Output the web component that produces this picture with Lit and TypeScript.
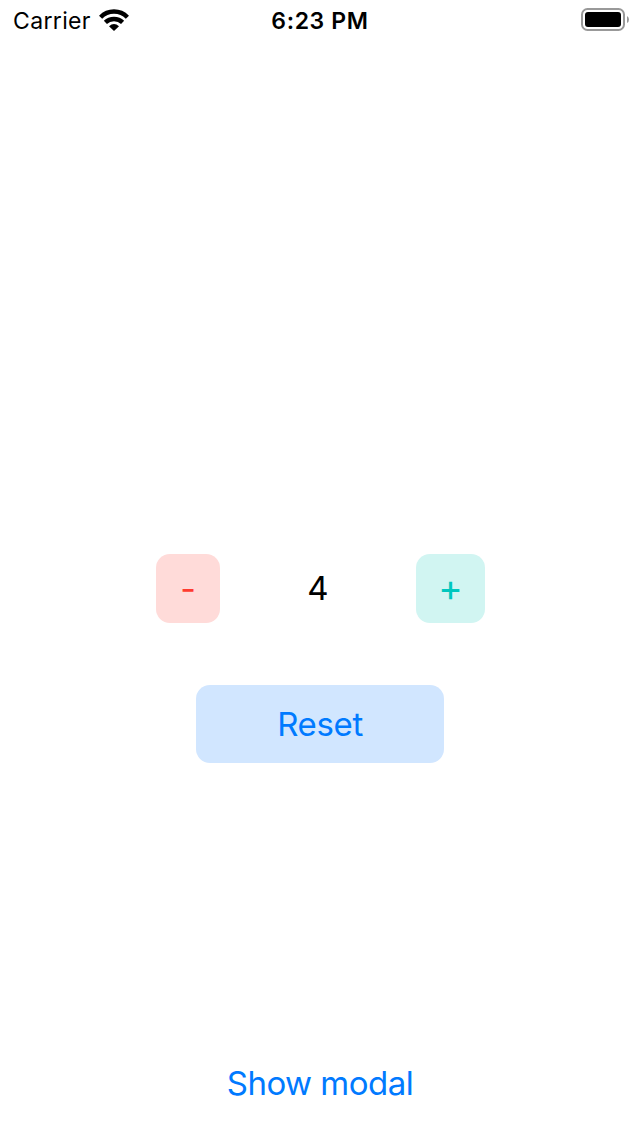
import { LitElement, html, css } from "lit";
import { customElement, state } from "lit/decorators.js";

@customElement("app-root")
class AppRoot extends LitElement {
  @state() count = 4;

  static styles = css`
    :host { display: flex; flex-direction: column; width: 640px; height: 1136px; background: #fff; color: #000; font-family: Inter, sans-serif; overflow: hidden; }
    .status { display: grid; grid-template-columns: 1fr auto 1fr; align-items: center; height: 40px; padding: 0 10px 0 13px; box-sizing: border-box; line-height: 40px; }
    .carrier { display: flex; align-items: center; gap: 8.6px; font-size: 23px; letter-spacing: 0.35px; }
    .carrier span, .time { padding-top: 2px; line-height: 38px; }
    .time { font-weight: 600; font-size: 23px; letter-spacing: 0.65px; margin-left: -3px; }
    .battery { justify-self: end; }
    svg { display: block; }
    .main { flex: 1; padding-top: 514px; box-sizing: border-box; }
    .stepper { display: flex; justify-content: space-between; width: 329px; margin: 0 0 62px 156px; height: 69px; align-items: center; font-size: 33px; }
    .stepper span { padding-bottom: 2px; }
    button { border: 0; padding: 0; font: inherit; font-size: 33px; letter-spacing: -0.52px; border-radius: 14px; height: 69px; }
    .minus { width: 64px; color: #ff3b30; background: #ffdbd9; font-size: 34px; letter-spacing: 0; }
    .plus { width: 69px; color: #00c7be; background: #d1f5f2; font-size: 37px; font-weight: 400; letter-spacing: 0; padding-bottom: 2px; }
    .reset { display: block; width: 248px; height: 78px; margin: 0 auto; padding: 0 0 1px; letter-spacing: -0.35px; color: #007aff; background: #d1e6ff; }
    .modal { display: block; margin: 0 auto 19px; color: #007aff; background: none; }
  `;

  render() {
    return html`
      <div class="status">
        <div class="carrier"><span>Carrier</span>
          <svg width="30" height="22" viewBox="0 0 30 22"><g fill="none" stroke="#000" stroke-width="4.4"><path d="M1.6 8.2C9 .6 21 .6 28.4 8.2"/><path d="M6.4 13.4C11 8.8 19 8.8 23.6 13.4"/></g><path d="M10 17.2Q15 13 20 17.2L15 22Z"/></svg>
        </div>
        <div class="time">6:23 PM</div>
        <svg class="battery" width="49" height="24" viewBox="0 0 49 24"><rect x="1" y="1" width="42" height="21" rx="5.5" fill="none" stroke="#999" stroke-width="2"/><rect x="4" y="4" width="36" height="15" rx="3"/><path d="M46 8Q48 9 48 11.5T46 15Z" fill="#999"/></svg>
      </div>
      <div class="main">
        <div class="stepper">
          <button class="minus" @click=${() => this.count--}>-</button>
          <span>${this.count}</span>
          <button class="plus" @click=${() => this.count++}>+</button>
        </div>
        <button class="reset" @click=${() => (this.count = 0)}>Reset</button>
      </div>
      <button class="modal">Show modal</button>
    `;
  }
}
